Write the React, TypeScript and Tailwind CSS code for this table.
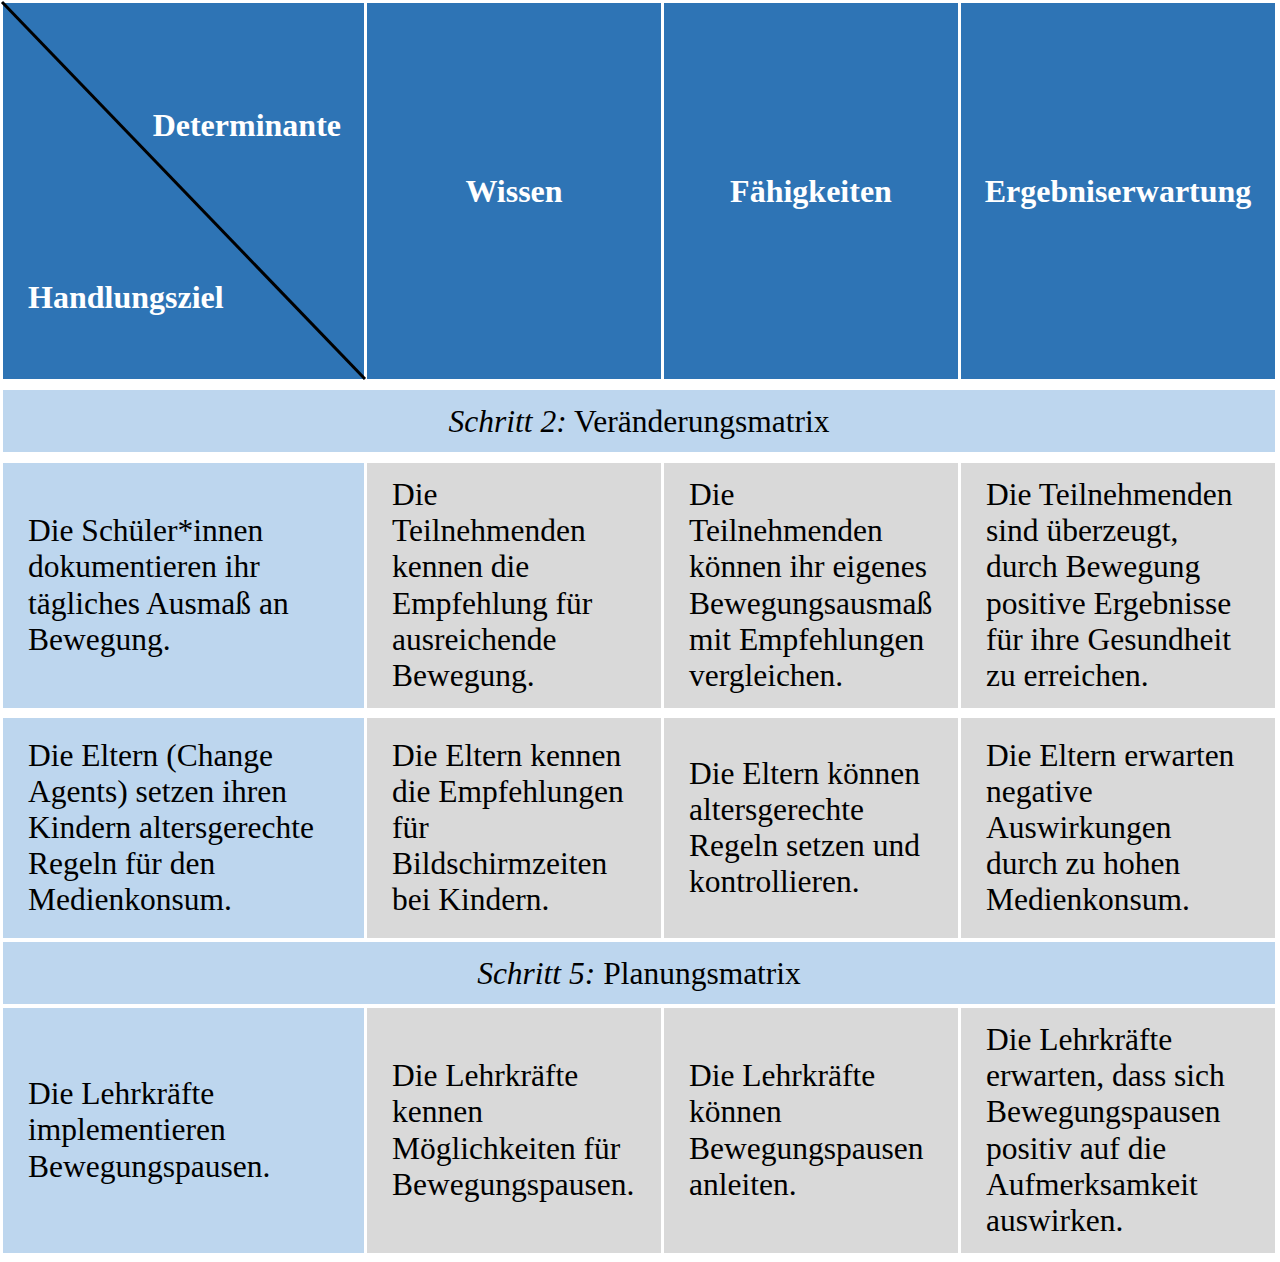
const SERIF = "font-['Liberation_Serif','Times_New_Roman',serif]";

const GRID = "grid grid-cols-[361px_294px_294px_314px] gap-x-[3px]";

type Row = {
  goal: string;
  cells: [string, string, string];
  height: string;
};

const MATRIX_ROWS: Row[] = [
  {
    goal: "Die Schüler*innen dokumentieren ihr tägliches Ausmaß an Bewegung.",
    cells: [
      "Die Teilnehmenden kennen die Empfehlung für ausreichende Bewegung.",
      "Die Teilnehmenden können ihr eigenes Bewegungsausmaß mit Empfehlungen vergleichen.",
      "Die Teilnehmenden sind überzeugt, durch Bewegung positive Ergebnisse für ihre Gesundheit zu erreichen.",
    ],
    height: "h-[245px]",
  },
  {
    goal: "Die Eltern (Change Agents) setzen ihren Kindern altersgerechte Regeln für den Medienkonsum.",
    cells: [
      "Die Eltern kennen die Empfehlungen für Bildschirmzeiten bei Kindern.",
      "Die Eltern können altersgerechte Regeln setzen und kontrollieren.",
      "Die Eltern erwarten negative Auswirkungen durch zu hohen Medienkonsum.",
    ],
    height: "h-[220px]",
  },
];

const PLAN_ROWS: Row[] = [
  {
    goal: "Die Lehrkräfte implementieren Bewegungspausen.",
    cells: [
      "Die Lehrkräfte kennen Möglichkeiten für Bewegungspausen.",
      "Die Lehrkräfte können Bewegungspausen anleiten.",
      "Die Lehrkräfte erwarten, dass sich Bewegungspausen positiv auf die Aufmerksamkeit auswirken.",
    ],
    height: "h-[245px]",
  },
];

function BodyRow({ row }: { row: Row }) {
  return (
    <div className={`${GRID} ${row.height}`}>
      <div className="flex items-center bg-[#BDD6EE] pl-[25px] pr-[20px]">
        <p>{row.goal}</p>
      </div>
      <div className="flex items-center bg-[#D9D9D9] pl-[25px] pr-[23px]">
        <p>{row.cells[0]}</p>
      </div>
      <div className="flex items-center bg-[#D9D9D9] pl-[25px] pr-[23px]">
        <p>{row.cells[1]}</p>
      </div>
      <div className="flex items-center bg-[#D9D9D9] pl-[25px] pr-[33px]">
        <p>{row.cells[2]}</p>
      </div>
    </div>
  );
}

function StepRow({ step, title }: { step: string; title: string }) {
  return (
    <div className="flex h-[62px] items-center justify-center bg-[#BDD6EE] pt-[3px]">
      <p>
        <span className="italic">{step}</span> {title}
      </p>
    </div>
  );
}

export default function App() {
  return (
    <div className={`min-h-[1262px] bg-white pl-[3px] pt-[3px] ${SERIF} text-[31.5px] leading-[1.149] text-black`}>
      <div className="flex w-[1272px] flex-col">
        {/* Header */}
        <div className={`${GRID} h-[376px] text-[32px] font-bold text-white`}>
          <div className="relative flex flex-col justify-between bg-[#2E74B5] pb-[63px] pl-[25px] pr-[23px] pt-[104px]">
            <svg
              className="absolute inset-0 h-full w-full overflow-visible"
              viewBox="0 0 361 376"
              preserveAspectRatio="none"
            >
              <line x1="-1" y1="-1" x2="362" y2="376" stroke="#000" strokeWidth="3" />
            </svg>
            <span className="self-end">Determinante</span>
            <span className="self-start">Handlungsziel</span>
          </div>
          <div className="flex items-center justify-center bg-[#2E74B5]">Wissen</div>
          <div className="flex items-center justify-center bg-[#2E74B5]">Fähigkeiten</div>
          <div className="flex items-center justify-center bg-[#2E74B5]">Ergebniserwartung</div>
        </div>

        <div className="mt-[11px]">
          <StepRow step="Schritt 2:" title="Veränderungsmatrix" />
        </div>

        <div className="mt-[11px] flex flex-col gap-[10px]">
          {MATRIX_ROWS.map((row) => (
            <BodyRow key={row.goal} row={row} />
          ))}
        </div>

        <div className="mt-[4px]">
          <StepRow step="Schritt 5:" title="Planungsmatrix" />
        </div>

        <div className="mt-[4px]">
          {PLAN_ROWS.map((row) => (
            <BodyRow key={row.goal} row={row} />
          ))}
        </div>
      </div>
    </div>
  );
}
